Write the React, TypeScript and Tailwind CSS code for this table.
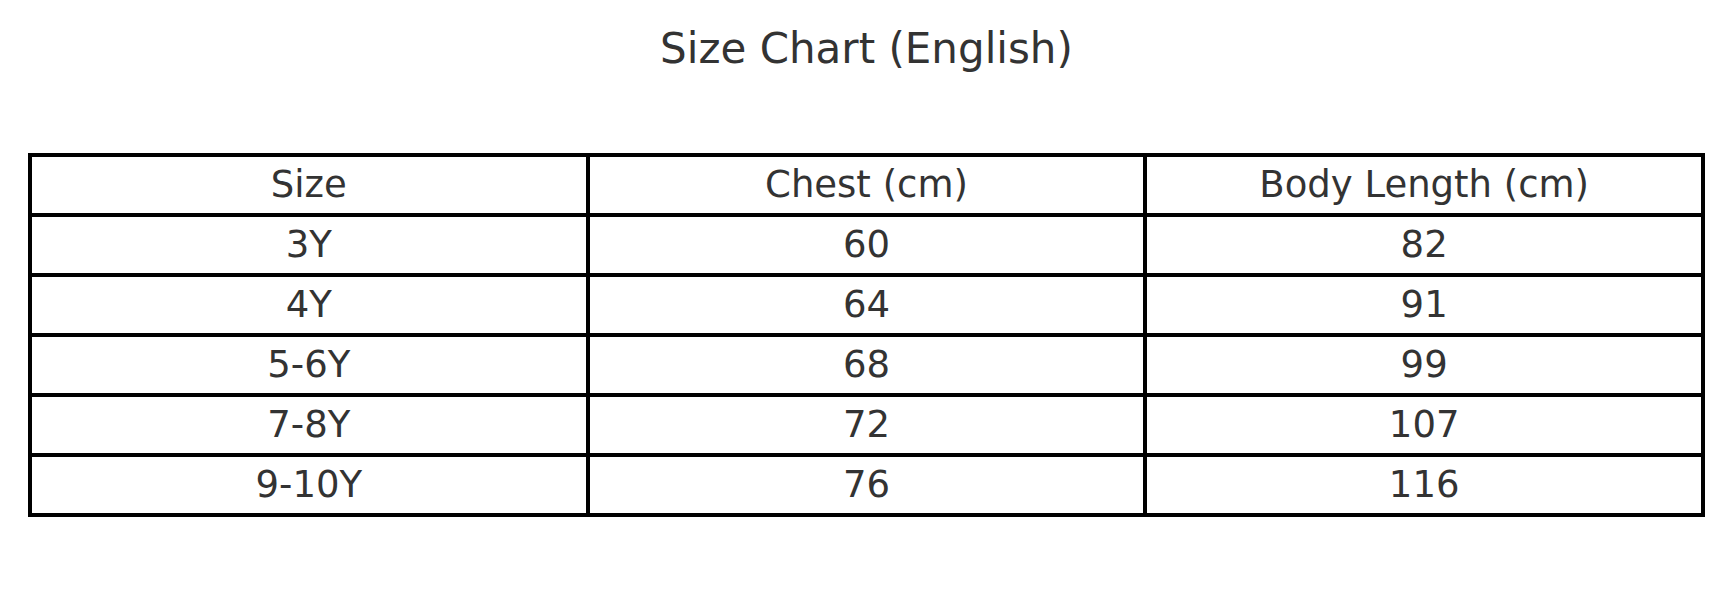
import React from "react";

const rows = [
  ["Size", "Chest (cm)", "Body Length (cm)"],
  ["3Y", "60", "82"],
  ["4Y", "64", "91"],
  ["5-6Y", "68", "99"],
  ["7-8Y", "72", "107"],
  ["9-10Y", "76", "116"],
];

export default function App() {
  return (
    <div className="w-[1733px] h-[596px] bg-white text-[#333333] font-['DejaVu_Sans',sans-serif]">
      <div className="h-[100px] pt-[23px] flex justify-center">
        <h1 className="text-[42px] leading-[52px] font-normal">Size Chart (English)</h1>
      </div>
      <table className="ml-[28px] mt-[53px] w-[1677px] table-fixed border-collapse">
        <tbody>
          {rows.map((r, i) => (
            <tr key={i}>
              {r.map((c, j) => (
                <td
                  key={j}
                  className="h-[60px] p-0 border-[4px] border-black text-center align-middle text-[37px] leading-[40px]"
                >
                  {c}
                </td>
              ))}
            </tr>
          ))}
        </tbody>
      </table>
    </div>
  );
}
